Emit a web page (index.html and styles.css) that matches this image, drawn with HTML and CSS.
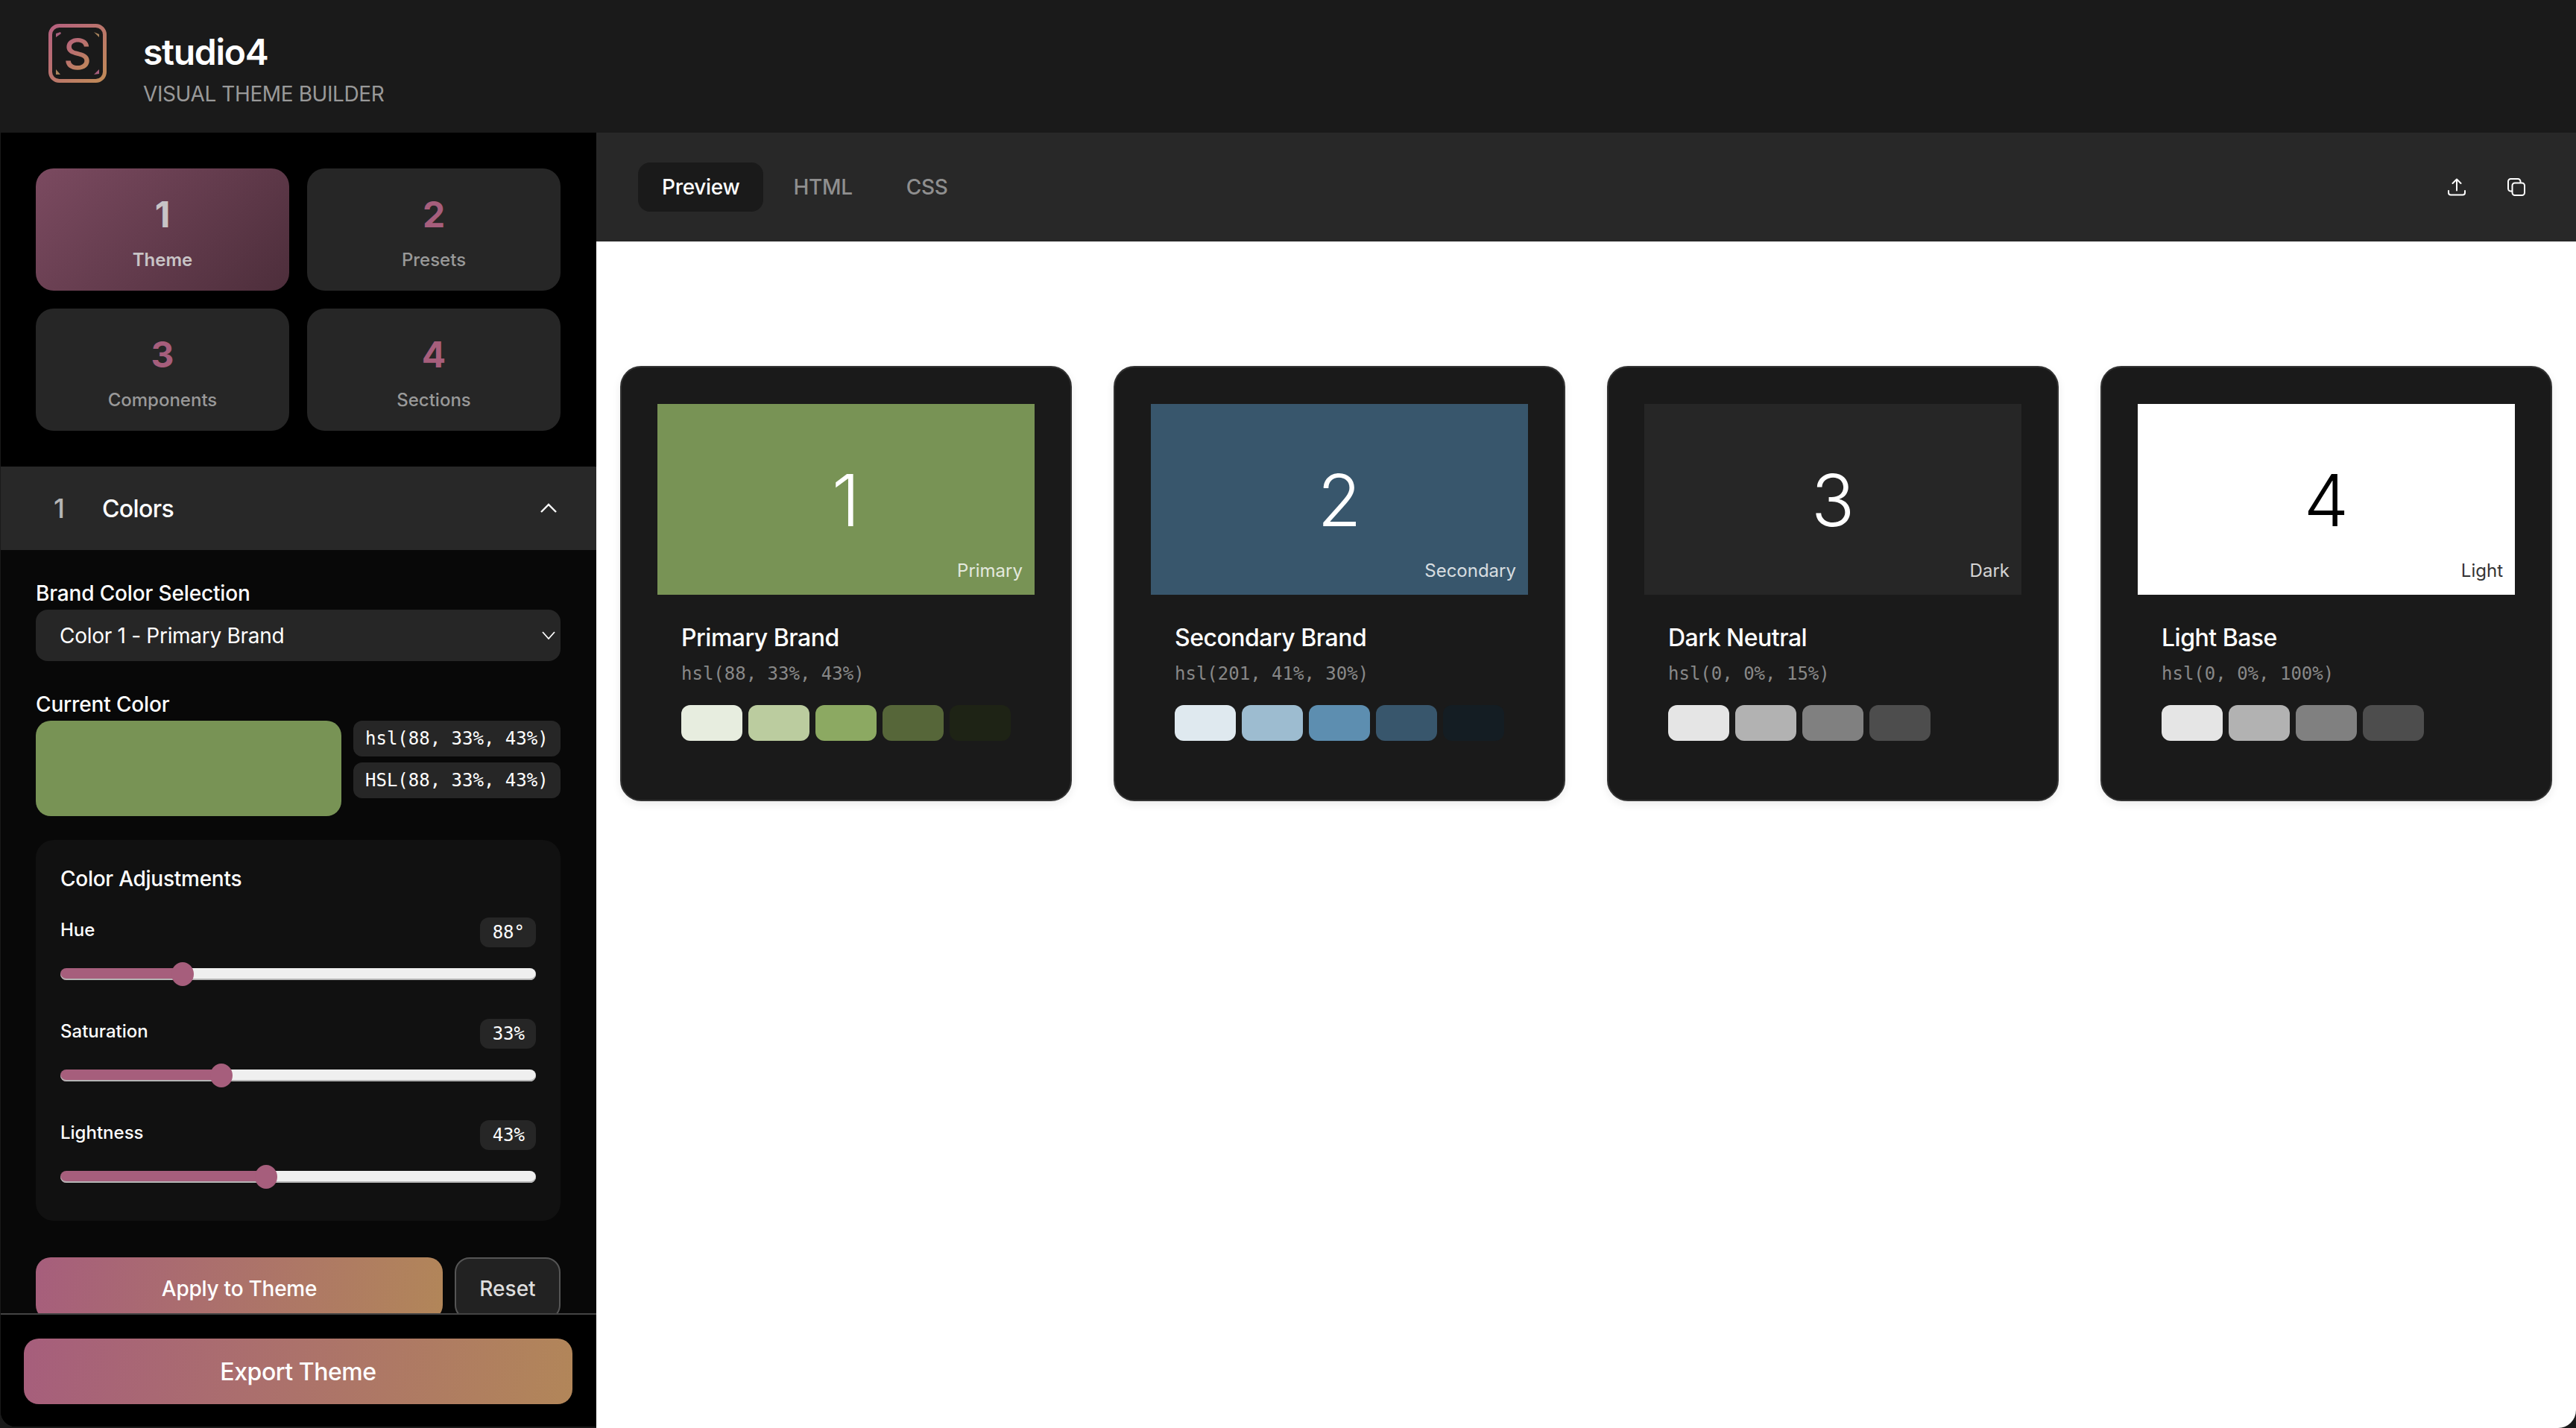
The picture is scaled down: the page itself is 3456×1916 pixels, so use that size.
FILE: index.html
```html
<!doctype html>
<html>
<head>
	<meta charset="utf-8">
	<title>studio4</title>
	<link rel="stylesheet" href="styles.css">
</head>

<body>
<div class="app">
	<header class="topbar">
		<svg class="logo" width="80" height="80" viewBox="0 0 80 80">
			<defs>
				<linearGradient id="brand" x1="0" y1="0" x2="1" y2="1">
					<stop offset="0" stop-color="#b5607f"/>
					<stop offset="1" stop-color="#c08a57"/>
				</linearGradient>
				<linearGradient id="brandText" gradientUnits="userSpaceOnUse" x1="20" y1="20" x2="60" y2="60">
					<stop offset="0" stop-color="#b5607f"/>
					<stop offset="1" stop-color="#c08a57"/>
				</linearGradient>
			</defs>
			<rect x="3.500" y="2.500" width="73" height="74" rx="12" fill="none" stroke="url(#brand)" stroke-width="5"/>
			<path d="M11 18 L11 13 L17 11 L18 13 Z" fill="#a65e7c"/>
			<path d="M62 11 L69 14 L69 18 Z" fill="#a8835c"/>
			<path d="M11 61 L17 68 L11 68 Z" fill="#a8835c"/>
			<path d="M69 61 L69 67 L62 68 Z" fill="#a65e7c"/>
			<text x="40" y="60.500" text-anchor="middle" class="logo-s" fill="url(#brandText)">S</text>
		</svg>
		<div class="brand">
			<div class="brand-name">studio4</div>
			<div class="brand-sub">VISUAL THEME BUILDER</div>
		</div>
	</header>

	<div class="workspace">
		<aside class="sidebar">
			<div class="side-scroll">
				<nav class="steps">
					<div class="step active"><span class="step-num">1</span><span class="step-label">Theme</span></div>
					<div class="step"><span class="step-num">2</span><span class="step-label">Presets</span></div>
					<div class="step"><span class="step-num">3</span><span class="step-label">Components</span></div>
					<div class="step"><span class="step-num">4</span><span class="step-label">Sections</span></div>
				</nav>

				<div class="acc-head">
					<span class="acc-num">1</span>
					<span class="acc-title">Colors</span>
					<svg class="acc-chevron" width="24" height="24" viewBox="0 0 24 24"><path d="M2 17 L12 7 L22 17" fill="none" stroke="#fff" stroke-width="2.400"/></svg>
				</div>

				<div class="acc-body">
					<div class="field-label">Brand Color Selection</div>
					<div class="select">
						<span>Color 1 - Primary Brand</span>
						<svg width="20" height="20" viewBox="0 0 20 20"><path d="M2 5 L10 14 L18 5" fill="none" stroke="#fff" stroke-width="1.800"/></svg>
					</div>

					<div class="field-label second">Current Color</div>
					<div class="current">
						<div class="current-swatch"></div>
						<div class="current-codes">
							<div class="code-box">hsl(88, 33%, 43%)</div>
							<div class="code-box">HSL(88, 33%, 43%)</div>
						</div>
					</div>

					<div class="adjust">
						<div class="adjust-title">Color Adjustments</div>
						<div class="slider-row">
							<span class="slider-name">Hue</span>
							<span class="slider-val">88°</span>
						</div>
						<input class="slider" type="range" min="0" max="360" value="88" style="--fill: 25.7%">
						<div class="slider-row">
							<span class="slider-name">Saturation</span>
							<span class="slider-val">33%</span>
						</div>
						<input class="slider" type="range" min="0" max="100" value="33" style="--fill: 33.8%">
						<div class="slider-row">
							<span class="slider-name">Lightness</span>
							<span class="slider-val">43%</span>
						</div>
						<input class="slider" type="range" min="0" max="100" value="43" style="--fill: 43.3%">
					</div>

					<div class="btn-row">
						<button class="btn-apply">Apply to Theme</button>
						<button class="btn-reset">Reset</button>
					</div>
				</div>
			</div>

			<footer class="side-foot">
				<button class="btn-export">Export Theme</button>
			</footer>
		</aside>

		<main class="main">
			<div class="toolbar">
				<div class="tabs">
					<span class="tab active">Preview</span>
					<span class="tab">HTML</span>
					<span class="tab">CSS</span>
				</div>
				<div class="tool-icons">
					<span class="icon-btn">
						<svg width="24" height="24" viewBox="0 0 24 24" fill="none" stroke="#fff" stroke-width="2" stroke-linecap="round" stroke-linejoin="round"><path d="M12 16.500 V1.500 M6.500 7 L12 1.500 L17.500 7"/><path d="M1 17 V19.500 A3 3 0 0 0 4 22.500 H20 A3 3 0 0 0 23 19.500 V17"/></svg>
					</span>
					<span class="icon-btn">
						<svg width="24" height="24" viewBox="0 0 24 24" fill="none" stroke="#fff" stroke-width="2" stroke-linejoin="round"><rect x="6.500" y="6.500" width="16.500" height="16.500" rx="3.500"/><path d="M6 17.500 H4.500 A3.500 3.500 0 0 1 1 14 V4.500 A3.500 3.500 0 0 1 4.500 1 H14 A3.500 3.500 0 0 1 17.500 4.500 V6"/></svg>
					</span>
				</div>
			</div>

			<div class="canvas">
				<section class="card">
					<div class="block block-primary"><span class="block-num">1</span><span class="block-tag">Primary</span></div>
					<div class="card-info">
						<div class="card-name">Primary Brand</div>
						<div class="card-code">hsl(88, 33%, 43%)</div>
						<div class="shades">
							<i class="shade g1"></i><i class="shade g2"></i><i class="shade g3"></i><i class="shade g4"></i><i class="shade g5"></i>
						</div>
					</div>
				</section>
				<section class="card">
					<div class="block block-secondary"><span class="block-num">2</span><span class="block-tag">Secondary</span></div>
					<div class="card-info">
						<div class="card-name">Secondary Brand</div>
						<div class="card-code">hsl(201, 41%, 30%)</div>
						<div class="shades">
							<i class="shade b1"></i><i class="shade b2"></i><i class="shade b3"></i><i class="shade b4"></i><i class="shade b5"></i>
						</div>
					</div>
				</section>
				<section class="card">
					<div class="block block-dark"><span class="block-num">3</span><span class="block-tag">Dark</span></div>
					<div class="card-info">
						<div class="card-name">Dark Neutral</div>
						<div class="card-code">hsl(0, 0%, 15%)</div>
						<div class="shades">
							<i class="shade n1"></i><i class="shade n2"></i><i class="shade n3"></i><i class="shade n4"></i>
						</div>
					</div>
				</section>
				<section class="card">
					<div class="block block-light"><span class="block-num">4</span><span class="block-tag">Light</span></div>
					<div class="card-info">
						<div class="card-name">Light Base</div>
						<div class="card-code">hsl(0, 0%, 100%)</div>
						<div class="shades">
							<i class="shade n1"></i><i class="shade n2"></i><i class="shade n3"></i><i class="shade n4"></i>
						</div>
					</div>
				</section>
			</div>
		</main>
	</div>
</div>
</body>
</html>
```

FILE: styles.css
```css
* { box-sizing: border-box; }
html, body { margin: 0; height: 100%; background: #1a1a1a; }
body { font-family: Inter, "Noto Sans", sans-serif; color: #fff; overflow: hidden; }

.app { height: 1916px; display: flex; flex-direction: column; overflow: hidden; }

/* top bar */
.topbar { height: 178px; flex: none; background: #1a1a1a; display: flex; align-items: flex-start; padding: 32px 0 0 64px; gap: 48px; }
.logo { flex: none; }
.logo-s { font-family: Inter, sans-serif; font-size: 58px; font-weight: 500; }
.brand { padding-top: 2px; }
.brand-name { font-size: 48px; line-height: 72px; font-weight: 600; letter-spacing: -1.3px; }
.brand-sub { font-size: 28px; line-height: 36px; color: #999; letter-spacing: -.4px; margin-top: 2px; }

.workspace { flex: 1; display: flex; min-height: 0; }

/* sidebar */
.sidebar { width: 799px; flex: none; display: flex; flex-direction: column; background: #000; margin: 0 0 2px 1px; border-bottom-left-radius: 20px; overflow: hidden; }
.side-scroll { flex: 1; min-height: 0; overflow: hidden; }
.steps { display: grid; grid-template-columns: 340px 340px; gap: 24px; padding: 48px 47px; }
.step { height: 164px; background: #262626; border-radius: 24px; display: flex; flex-direction: column; align-items: center; color: #999; }
.step.active { background: linear-gradient(135deg, #7b4a60, #4d2e3b); color: #c8c4c6; }
.step-num { font-size: 48px; font-weight: 700; line-height: 56px; margin-top: 34px; color: #a65e7c; }
.step.active .step-num { color: #c8c4c6; }
.step-label { font-size: 24px; font-weight: 500; line-height: 30px; margin-top: 18px; }
.step.active .step-label { font-weight: 600; }

.acc-head { height: 112px; background: #282828; display: flex; align-items: center; padding: 0 52px 0 71px; }
.acc-num { font-size: 36px; font-weight: 500; color: #b5b5b5; width: 65px; }
.acc-title { font-size: 32px; font-weight: 500; flex: 1; letter-spacing: -.6px; }
.acc-body { background: #080808; padding: 40px 48px 0 47px; }

.field-label { font-size: 28px; font-weight: 500; line-height: 36px; margin-bottom: 4px; letter-spacing: -.15px; }
.field-label.second { margin-top: 40px; }
.select { height: 69px; background: #262626; border-radius: 16px; display: flex; align-items: center; justify-content: space-between; padding: 0 6px 0 32px; font-size: 28px; letter-spacing: -.29px; }

.current { display: flex; gap: 16px; }
.current-swatch { width: 410px; height: 128px; border-radius: 20px; background: #789355; }
.current-codes { flex: 1; display: flex; flex-direction: column; gap: 8px; }
.code-box { height: 48px; background: #262626; border-radius: 12px; padding: 0 16px; font-family: "DejaVu Sans Mono", monospace; font-size: 24px; line-height: 48px; white-space: nowrap; }

.adjust { margin-top: 32px; background: #111; border-radius: 24px; padding: 34px 33px 51px; }
.adjust-title { font-size: 28px; font-weight: 500; line-height: 36px; margin-bottom: 34px; letter-spacing: -.26px; }
.slider-row { display: flex; justify-content: space-between; align-items: flex-start; margin-top: 52px; margin-bottom: 28px; }
.adjust-title + .slider-row { margin-top: 0; }
.slider-name { font-size: 24px; font-weight: 500; line-height: 34px; }
.slider-val { height: 40px; padding: 0 15px 0 17px; background: #262626; border-radius: 12px; font-family: "DejaVu Sans Mono", monospace; font-size: 24px; line-height: 40px; }

.slider { display: block; width: 100%; height: 16px; margin: 0; border-radius: 8px; -webkit-appearance: none; appearance: none; background: linear-gradient(to right, #a65e7c var(--fill), #efefef var(--fill)); box-shadow: inset 0 -2px 0 #b5b5b5; }
.slider::-webkit-slider-thumb { -webkit-appearance: none; width: 30px; height: 32px; border-radius: 50%; background: #a65e7c; }

.btn-row { display: flex; gap: 16px; margin-top: 49px; }
.btn-apply, .btn-reset, .btn-export { font-family: inherit; color: #fff; font-weight: 500; border: none; }
.btn-apply { flex: 1; height: 84px; border-radius: 20px; font-size: 28px; letter-spacing: -.24px; background: linear-gradient(100deg, #a65e7c, #b28659); }
.btn-reset { width: 142px; height: 84px; border-radius: 20px; font-size: 28px; background: #222; border: 2px solid #555; color: #ddd; }

.side-foot { height: 152px; flex: none; background: #000; border-top: 2px solid #444; padding: 32px 32px 0 31px; }
.btn-export { width: 100%; height: 88px; border-radius: 20px; font-size: 32px; letter-spacing: -.45px; background: linear-gradient(100deg, #a65e7c, #b28659); }

/* main */
.main { flex: 1; min-width: 0; display: flex; flex-direction: column; background: #fff; border-bottom-right-radius: 24px; overflow: hidden; }
.toolbar { height: 146px; flex: none; background: #282828; display: flex; align-items: center; justify-content: space-between; padding: 0 56px; }
.tabs { display: flex; gap: 8px; }
.tab { font-size: 28px; line-height: 66px; height: 66px; padding: 0 32px; color: #8f8f8f; font-weight: 500; border-radius: 16px; letter-spacing: -.3px; }
.tab.active { background: #1a1a1a; color: #fff; }
.tool-icons { display: flex; gap: 32px; }
.icon-btn { width: 48px; height: 48px; display: flex; align-items: center; justify-content: center; }

.canvas { display: flex; gap: 56px; padding: 167px 32px 0; align-items: flex-start; }
.card { flex: 1; height: 584px; background: #1a1a1a; border: 2px solid #333; border-radius: 28px; padding: 49px 48px 0; box-shadow: 0 4px 12px rgba(0,0,0,.08); }
.block { height: 256px; position: relative; display: flex; align-items: center; justify-content: center; }
.block-primary { background: #789355; }
.block-secondary { background: #38566c; }
.block-dark { background: #262626; }
.block-light { background: #fff; color: #000; }
.block-num { font-size: 96px; font-weight: 300; padding-top: 2px; }
.block-tag { position: absolute; right: 16px; bottom: 17px; font-size: 24px; line-height: 30px; opacity: .8; }

.card-info { padding: 38px 32px 0; }
.card-name { font-size: 32px; font-weight: 500; line-height: 40px; letter-spacing: -.5px; }
.card-code { font-family: "DejaVu Sans Mono", monospace; font-size: 24px; line-height: 32px; color: #888; margin-top: 12px; }
.shades { display: flex; gap: 8px; margin-top: 26px; }
.shade { width: 82px; height: 48px; border-radius: 12px; display: block; }
.g1 { background: #e7eddf; }
.g2 { background: #bbcc9f; }
.g3 { background: #8ca962; }
.g4 { background: #566639; }
.g5 { background: #1e2315; }
.b1 { background: #dfe9ef; }
.b2 { background: #9dbcd0; }
.b3 { background: #5d8eb0; }
.b4 { background: #38566c; }
.b5 { background: #141d23; }
.n1 { background: #e5e5e5; }
.n2 { background: #b2b2b2; }
.n3 { background: #808080; }
.n4 { background: #4d4d4d; }
```
